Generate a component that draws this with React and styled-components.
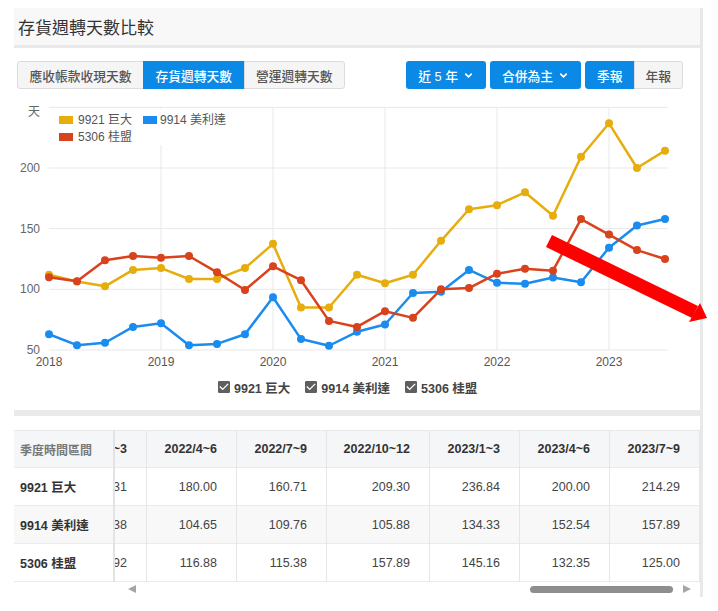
import React from 'react';
import styled, { createGlobalStyle } from 'styled-components';
import { ChevronDown } from 'lucide-react';
import { MdCheckBox } from 'react-icons/md';

const GlobalStyle = createGlobalStyle`
  body {
    margin: 0;
    background: #fff;
    font-family: "Liberation Sans", "Noto Sans CJK TC", sans-serif;
  }
`;

const BLUE = '#0a8ae6';

const series = [
  {
    name: '9921 巨大',
    color: '#e6ad0c',
    values: [112, 106.5, 102.5, 116, 117.5, 108.5, 108.5, 117.5, 137.5, 85, 85, 112, 105, 112, 140, 166, 169.31, 180, 160.71, 209.3, 236.84, 200, 214.29]
  },
  {
    name: '9914 美利達',
    color: '#1a8cef',
    values: [63, 54, 56, 69, 72, 54, 55, 63, 93.5, 59, 53.5, 65, 71, 97, 98, 116, 105.38, 104.65, 109.76, 105.88, 134.33, 152.54, 157.89]
  },
  {
    name: '5306 桂盟',
    color: '#d8421c',
    values: [110, 106.6, 124, 127.5, 126, 127.5, 114, 99.5, 119, 107.5, 74, 69, 82, 76.5, 100, 101, 112.92, 116.88, 115.38, 157.89, 145.16, 132.35, 125]
  }
];

const QS = ['1~3', '4~6', '7~9', '10~12'];
const quarters = series[0].values.map((_, i) => `${2018 + Math.floor(i / 4)}/${QS[i % 4]}`);

const X0 = 35;
const STEP = 28;
const yOf = v => 73 + (200 - v) * 1.2133;

const Root = styled.div`
  position: relative;
  width: 718px;
  height: 611px;
  overflow: hidden;
`;

const Page = styled.div`
  padding: 8px 15px 0 14px;
`;

const Shell = styled.div`
  background: #e9e9e9;
  padding-right: 3px;
  display: flex;
  flex-direction: column;
`;

const TitleBar = styled.div`
  height: 37px;
  background: #f8f8f8;
  display: flex;
  align-items: center;
  padding-left: 4px;
  font-size: 17px;
  color: #333;
  margin-bottom: 3px;
`;

const ChartCard = styled.div`
  background: #fff;
  margin-bottom: 6px;
  padding-bottom: 8px;
`;

const Controls = styled.div`
  display: flex;
  justify-content: space-between;
  padding: 13px 17px 0 3px;
`;

const Tabs = styled.div`
  display: flex;
`;

const Tab = styled.div`
  height: 28px;
  box-sizing: border-box;
  display: flex;
  align-items: center;
  padding: 0 11.5px;
  font-size: 12.75px;
  font-weight: 500;
  border: 1px solid ${p => (p.$active ? BLUE : '#dcdcdc')};
  background: ${p => (p.$active ? BLUE : '#f5f5f5')};
  color: ${p => (p.$active ? '#fff' : '#555')};
  margin-left: -1px;
  &:first-child {
    margin-left: 0;
    border-radius: 3px 0 0 3px;
  }
  &:last-child {
    border-radius: 0 3px 3px 0;
  }
`;

const RightGroup = styled.div`
  display: flex;
  gap: 4px;
`;

const DropBtn = styled.div`
  height: 28px;
  box-sizing: border-box;
  display: flex;
  align-items: center;
  gap: 5px;
  padding: 0 12px;
  background: ${BLUE};
  color: #fff;
  border-radius: 3px;
  font-size: 12.75px;
  font-weight: 500;
`;

const Segment = styled.div`
  display: flex;
`;

const SegBtn = styled(Tab)`
  padding: 0 11px;
`;

const ChartSvg = styled.svg`
  display: block;
  margin-top: 6px;
  font-family: "Liberation Sans", "Noto Sans CJK TC", sans-serif;
`;

const Legend = styled.div`
  height: 30px;
  display: flex;
  align-items: center;
  padding-left: 202px;
  gap: 13px;
`;

const LegendItem = styled.div`
  display: flex;
  align-items: center;
  gap: 2px;
  font-size: 12.5px;
  font-weight: bold;
  color: #444;
`;

const TableCard = styled.div`
  background: #fff;
  padding-top: 14px;
`;

const TableRow = styled.div`
  display: flex;
`;

const Fixed = styled.table`
  border-collapse: collapse;
  width: 101px;
  flex-shrink: 0;
  border-right: 2px solid #e3e3e3;
`;

const ScrollArea = styled.div`
  flex: 1;
  display: flex;
  justify-content: flex-end;
  overflow: hidden;
`;

const DataTable = styled.table`
  border-collapse: collapse;
  table-layout: fixed;
  flex-shrink: 0;
`;

const Tr = styled.tr`
  background: ${p => (p.$head ? '#f5f6f7' : p.$alt ? '#f8f8f8' : '#fff')};
  height: ${p => (p.$head ? 37 : 38)}px;
  border-top: ${p => (p.$head ? '1px solid #e8e8e8' : 'none')};
  border-bottom: 1px solid #ebebeb;
`;

const LabelCell = styled.td`
  padding: 0 0 0 6px;
  font-size: ${p => (p.$head ? 12 : 12.5)}px;
  font-weight: bold;
  color: ${p => (p.$head ? '#777' : '#333')};
  white-space: nowrap;
`;

const Th = styled.th`
  box-sizing: border-box;
  padding: 0 19px 0 0;
  text-align: right;
  font-size: 12.5px;
  font-weight: bold;
  color: #333;
  border-right: 1px solid #e6e6e6;
  white-space: nowrap;
`;

const Td = styled.td`
  padding: 0 19px 0 0;
  text-align: right;
  font-size: 12.5px;
  color: #444;
  border-right: 1px solid #e6e6e6;
  white-space: nowrap;
`;

const ScrollBar = styled.div`
  display: flex;
  align-items: center;
  height: 14px;
  margin-left: 103px;
  padding-bottom: 1px;
`;

const Arrow = styled.div`
  width: 0;
  height: 0;
  border-top: 4px solid transparent;
  border-bottom: 4px solid transparent;
  ${p => (p.$dir === 'left' ? 'border-right: 8px solid #a5a5a5;' : 'border-left: 8px solid #a5a5a5;')}
  margin: ${p => (p.$dir === 'left' ? '0 0 0 11px' : '0 9px 0 0')};
`;

const Track = styled.div`
  flex: 1;
  display: flex;
  justify-content: flex-end;
  padding-right: 10px;
`;

const Thumb = styled.div`
  width: 143px;
  height: 7px;
  border-radius: 4px;
  background: #8e8e8e;
`;

const Overlay = styled.svg`
  position: absolute;
  left: 0;
  top: 0;
  pointer-events: none;
`;

function Chart() {
  const yTicks = [200, 150, 100, 50];
  const years = [2018, 2019, 2020, 2021, 2022, 2023];
  return (
    <ChartSvg width="686" height="277">
      {[250, ...yTicks].map(v => (
        <line key={v} x1={X0} x2={654} y1={yOf(v)} y2={yOf(v)} stroke="#e8e8e8" strokeWidth="1" />
      ))}
      {years.slice(1).map((y, i) => {
        const x = X0 + (i + 1) * 4 * STEP;
        return <line key={y} x1={x} x2={x} y1={yOf(250)} y2={yOf(50)} stroke="#e8e8e8" strokeWidth="1" />;
      })}
      <text x="26" y={yOf(250) + 9} textAnchor="end" fontSize="12" fill="#666">天</text>
      {yTicks.map(v => (
        <text key={v} x="26" y={yOf(v) + 4} textAnchor="end" fontSize="12" fill="#666">{v}</text>
      ))}
      {years.map((y, i) => (
        <text key={y} x={X0 + i * 4 * STEP} y="271" textAnchor="middle" fontSize="12" fill="#555">{y}</text>
      ))}
      <rect x="41" y="14" width="180" height="36" fill="#fff" />
      <rect x="45" y="21" width="14" height="8" fill={series[0].color} />
      <text x="64" y="29" fontSize="12" fill="#555">{series[0].name}</text>
      <rect x="129" y="21" width="14" height="8" fill={series[1].color} />
      <text x="146" y="29" fontSize="12" fill="#555">{series[1].name}</text>
      <rect x="45" y="38" width="14" height="8" fill={series[2].color} />
      <text x="64" y="46" fontSize="12" fill="#555">{series[2].name}</text>
      {series.map(s => (
        <g key={s.name}>
          <polyline
            points={s.values.map((v, i) => `${X0 + i * STEP},${yOf(v)}`).join(' ')}
            fill="none"
            stroke={s.color}
            strokeWidth="2.5"
            strokeLinejoin="round"
          />
          {s.values.map((v, i) => (
            <circle key={i} cx={X0 + i * STEP} cy={yOf(v)} r="4" fill={s.color} />
          ))}
        </g>
      ))}
    </ChartSvg>
  );
}

function QuarterTable() {
  const colWidth = q => (q.endsWith('10~12') ? 103 : 90);
  return (
    <>
      <TableRow>
        <Fixed>
          <tbody>
            <Tr $head>
              <LabelCell $head>季度時間區間</LabelCell>
            </Tr>
            {series.map((s, r) => (
              <Tr key={s.name} $alt={r === 1}>
                <LabelCell>{s.name}</LabelCell>
              </Tr>
            ))}
          </tbody>
        </Fixed>
        <ScrollArea>
          <DataTable>
            <colgroup>
              {quarters.map(q => (
                <col key={q} style={{ width: colWidth(q) }} />
              ))}
            </colgroup>
            <tbody>
              <Tr $head>
                {quarters.map(q => (
                  <Th key={q}>{q}</Th>
                ))}
              </Tr>
              {series.map((s, r) => (
                <Tr key={s.name} $alt={r === 1}>
                  {s.values.map((v, i) => (
                    <Td key={i}>{v.toFixed(2)}</Td>
                  ))}
                </Tr>
              ))}
            </tbody>
          </DataTable>
        </ScrollArea>
      </TableRow>
      <ScrollBar>
        <Arrow $dir="left" />
        <Track>
          <Thumb />
        </Track>
        <Arrow $dir="right" />
      </ScrollBar>
    </>
  );
}

export default function App() {
  return (
    <Root>
      <GlobalStyle />
      <Page>
        <Shell>
          <TitleBar>存貨週轉天數比較</TitleBar>
          <ChartCard>
            <Controls>
              <Tabs>
                <Tab>應收帳款收現天數</Tab>
                <Tab $active>存貨週轉天數</Tab>
                <Tab>營運週轉天數</Tab>
              </Tabs>
              <RightGroup>
                <DropBtn>
                  近 5 年 <ChevronDown size={11} strokeWidth={3.5} />
                </DropBtn>
                <DropBtn>
                  合併為主 <ChevronDown size={11} strokeWidth={3.5} />
                </DropBtn>
                <Segment>
                  <SegBtn $active>季報</SegBtn>
                  <SegBtn>年報</SegBtn>
                </Segment>
              </RightGroup>
            </Controls>
            <Chart />
            <Legend>
              {series.map(s => (
                <LegendItem key={s.name}>
                  <MdCheckBox size={16} color="#5f5f5f" />
                  {s.name}
                </LegendItem>
              ))}
            </Legend>
          </ChartCard>
          <TableCard>
            <QuarterTable />
          </TableCard>
        </Shell>
      </Page>
      <Overlay width="718" height="611">
        <polygon points="546,247 552,235 698,306 692,318" fill="#ff0000" />
        <polygon points="700,303 707,318 689,322" fill="#ff0000" />
      </Overlay>
    </Root>
  );
}
